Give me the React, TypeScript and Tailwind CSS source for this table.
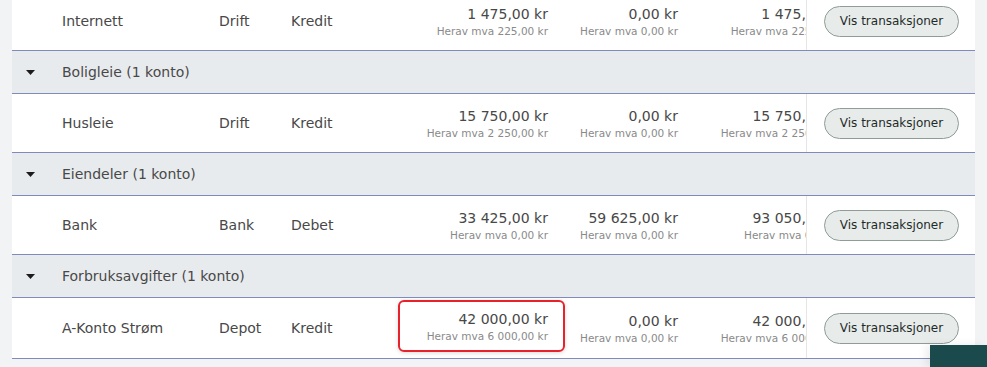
import React from "react";

type Row = {
  name: string;
  type: string;
  dc: string;
  a1: string;
  m1: string;
  a2: string;
  m2: string;
  a3: string;
  m3: string;
  highlight?: boolean;
  tall?: boolean;
};

const font = { fontFamily: '"DejaVu Sans", sans-serif' };

function Amount({ a, m }: { a: string; m: string }) {
  return (
    <div className="flex flex-col items-end whitespace-nowrap">
      <div className="text-[14px] leading-[18px] text-[#484848]">{a}</div>
      <div className="mt-[1px] text-[10.5px] leading-[14px] text-[#8a8a8a]">{m}</div>
    </div>
  );
}

function DataRow({ r }: { r: Row }) {
  return (
    <div
      className={`flex border-b border-[#8189bd] bg-white ${r.tall ? "h-[61px]" : "h-[59px]"}`}
    >
      <div className="flex min-w-0 flex-1 items-center overflow-hidden">
        <div className="w-[50px] shrink-0" />
        <div className="w-[157px] shrink-0 text-[14px] text-[#484848]">{r.name}</div>
        <div className="w-[72px] shrink-0 text-[14px] text-[#484848]">{r.type}</div>
        <div className="w-[107px] shrink-0 text-[14px] text-[#484848]">{r.dc}</div>
        <div className="flex h-full w-[167px] shrink-0 items-center">
          {r.highlight ? (
            <div className="mt-[-4px] flex h-[52px] w-full items-center justify-end rounded-[6px] border-2 border-[#e8212b] pr-[15px] shadow-[0_1px_4px_rgba(0,0,0,0.15)]">
              <Amount a={r.a1} m={r.m1} />
            </div>
          ) : (
            <div className="flex w-full justify-end pr-[17px]">
              <Amount a={r.a1} m={r.m1} />
            </div>
          )}
        </div>
        <div className="flex w-[130px] shrink-0 justify-end pr-[17px]">
          <Amount a={r.a2} m={r.m2} />
        </div>
        <div className="flex w-[164px] shrink-0 justify-end pr-[17px]">
          <Amount a={r.a3} m={r.m3} />
        </div>
      </div>
      <div className="flex w-[169px] shrink-0 items-center border-l border-[#e6e6e6] pl-[17px]">
        <button className="h-[31px] w-[135px] rounded-full border border-[#8f9d96] bg-[#e7ebe9] text-[12px] text-[#1f2b2b]">
          Vis transaksjoner
        </button>
      </div>
    </div>
  );
}

function GroupRow({ label }: { label: string }) {
  return (
    <div className="flex h-[43px] items-center border-b border-[#8189bd] bg-[#e8ebee]">
      <div className="flex w-[50px] shrink-0 items-center pl-[14px]">
        <svg width="9" height="5" viewBox="0 0 9 5">
          <polygon points="0,0 9,0 4.5,5" fill="#1c1c1c" />
        </svg>
      </div>
      <div className="text-[14px] text-[#484848]">{label}</div>
    </div>
  );
}

export default function App() {
  const r1: Row = {
    name: "Internett",
    type: "Drift",
    dc: "Kredit",
    a1: "1 475,00 kr",
    m1: "Herav mva 225,00 kr",
    a2: "0,00 kr",
    m2: "Herav mva 0,00 kr",
    a3: "1 475,00 kr",
    m3: "Herav mva 225,00 kr",
  };
  const r2: Row = {
    name: "Husleie",
    type: "Drift",
    dc: "Kredit",
    a1: "15 750,00 kr",
    m1: "Herav mva 2 250,00 kr",
    a2: "0,00 kr",
    m2: "Herav mva 0,00 kr",
    a3: "15 750,00 kr",
    m3: "Herav mva 2 250,00 kr",
  };
  const r3: Row = {
    name: "Bank",
    type: "Bank",
    dc: "Debet",
    a1: "33 425,00 kr",
    m1: "Herav mva 0,00 kr",
    a2: "59 625,00 kr",
    m2: "Herav mva 0,00 kr",
    a3: "93 050,00 kr",
    m3: "Herav mva 0,00 kr",
  };
  const r4: Row = {
    name: "A-Konto Strøm",
    type: "Depot",
    dc: "Kredit",
    a1: "42 000,00 kr",
    m1: "Herav mva 6 000,00 kr",
    a2: "0,00 kr",
    m2: "Herav mva 0,00 kr",
    a3: "42 000,00 kr",
    m3: "Herav mva 6 000,00 kr",
    highlight: true,
    tall: true,
  };
  return (
    <div
      className="relative h-[367px] w-[987px] overflow-hidden bg-[#f2f3f5]"
      style={font}
    >
      <div className="mx-[12px] mt-[-8px] flex flex-col">
        <DataRow r={r1} />
        <GroupRow label="Boligleie (1 konto)" />
        <DataRow r={r2} />
        <GroupRow label="Eiendeler (1 konto)" />
        <DataRow r={r3} />
        <GroupRow label="Forbruksavgifter (1 konto)" />
        <DataRow r={r4} />
      </div>
      <div className="absolute bottom-0 right-0 h-[22px] w-[57px] bg-[#1a4a4b] shadow-[-4px_0_8px_rgba(0,0,0,0.08)]" />
    </div>
  );
}
